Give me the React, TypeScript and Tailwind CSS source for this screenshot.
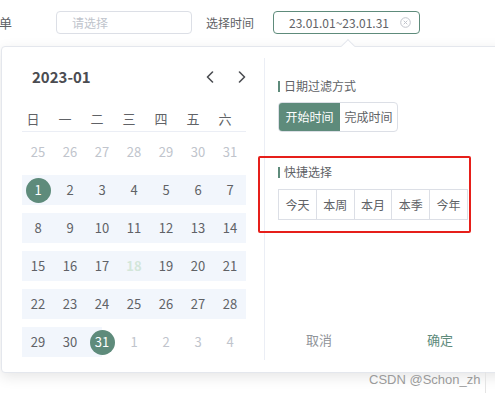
import React from "react";

const GREEN = "#5e8b7b";

type Day = { n: number; muted?: boolean };

const weeks: Day[][] = [
  [25, 26, 27, 28, 29, 30, 31].map((n) => ({ n, muted: true })),
  [1, 2, 3, 4, 5, 6, 7].map((n) => ({ n })),
  [8, 9, 10, 11, 12, 13, 14].map((n) => ({ n })),
  [15, 16, 17, 18, 19, 20, 21].map((n) => ({ n })),
  [22, 23, 24, 25, 26, 27, 28].map((n) => ({ n })),
  [
    { n: 29 },
    { n: 30 },
    { n: 31 },
    { n: 1, muted: true },
    { n: 2, muted: true },
    { n: 3, muted: true },
    { n: 4, muted: true },
  ],
];

const weekNames = ["日", "一", "二", "三", "四", "五", "六"];
const quick = ["今天", "本周", "本月", "本季", "今年"];

function Chevron({ dir }: { dir: "left" | "right" }) {
  return (
    <svg width="8" height="12" viewBox="0 0 8 12" fill="none">
      <path
        d={dir === "left" ? "M6.5 1 L1.5 6 L6.5 11" : "M1.5 1 L6.5 6 L1.5 11"}
        stroke="#4b4d52"
        strokeWidth="1.6"
        strokeLinecap="round"
        strokeLinejoin="round"
      />
    </svg>
  );
}

function DayCell({ day, row }: { day: Day; row: number }) {
  const selected = (row === 1 && day.n === 1) || (row === 5 && day.n === 31);
  const today = row === 3 && day.n === 18;
  const halfBg = row === 5 && day.n === 31;

  return (
    <div
      className={`flex h-full items-center justify-center ${
        halfBg ? "bg-[linear-gradient(to_right,#f2f6fc_50%,transparent_50%)]" : ""
      }`}
    >
      {selected ? (
        <span
          className="flex h-[25px] w-[25px] items-center justify-center rounded-full text-[13px] text-white"
          style={{ backgroundColor: GREEN }}
        >
          {day.n}
        </span>
      ) : (
        <span
          className={`text-[13px] ${
            day.muted ? "text-[#c0c4cc]" : today ? "font-bold text-[#d3e6da]" : "text-[#606266]"
          }`}
        >
          {day.n}
        </span>
      )}
    </div>
  );
}

function Calendar() {
  return (
    <div className="w-[262px] shrink-0 pl-[20px] pr-[18px] pt-[18px]">
      <div className="flex h-[24px] items-center justify-between">
        <span className="ml-[10px] text-[15px] font-bold text-[#4a4c51]">2023-01</span>
        <div className="flex items-center gap-[24px]">
          <Chevron dir="left" />
          <Chevron dir="right" />
        </div>
      </div>

      <div className="mt-[18px] grid h-[25px] grid-cols-7 items-center border-b border-[#ebeef5]">
        {weekNames.map((w) => (
          <span key={w} className="pr-[10px] text-center text-[13px] text-[#606266]">
            {w}
          </span>
        ))}
      </div>

      <div className="mt-[5px] flex flex-col gap-[8px]">
        {weeks.map((week, r) => (
          <div
            key={r}
            className={`grid h-[30px] grid-cols-7 ${r >= 1 && r <= 4 ? "bg-[#f2f6fc]" : ""}`}
          >
            {week.map((d, c) => (
              <div
                key={c}
                className={r === 5 && c < 2 ? "bg-[#f2f6fc]" : ""}
              >
                <DayCell day={d} row={r} />
              </div>
            ))}
          </div>
        ))}
      </div>
    </div>
  );
}

function Label({ text }: { text: string }) {
  return (
    <div className="flex h-[16px] items-center gap-[4px]">
      <span className="h-[11px] w-[2px]" style={{ backgroundColor: GREEN }} />
      <span className="text-[12px] text-[#606266]">{text}</span>
    </div>
  );
}

function FilterPanel() {
  return (
    <div className="mb-[12px] mt-[11px] flex flex-1 flex-col border-l border-[#ebeef5] pl-[13px] pt-[20px]">
      <Label text="日期过滤方式" />
      <div className="mt-[8px] flex h-[30px] w-[120px] overflow-hidden rounded-[4px] border border-[#dcdfe6] text-[12px]">
        <span
          className="flex w-[61px] items-center justify-center text-white"
          style={{ backgroundColor: GREEN }}
        >
          开始时间
        </span>
        <span className="flex flex-1 items-center justify-center text-[#606266]">完成时间</span>
      </div>

      <div className="relative mt-[32px] w-[190px]">
        <Label text="快捷选择" />
        <div className="mt-[9px] flex h-[31px] border border-[#dcdfe6]">
          {quick.map((q, i) => (
            <span
              key={q}
              className={`flex flex-1 items-center justify-center text-[12px] text-[#606266] ${
                i > 0 ? "border-l border-[#dcdfe6]" : ""
              }`}
            >
              {q}
            </span>
          ))}
        </div>
        <div className="pointer-events-none absolute -bottom-[13px] -left-[20px] -right-[3px] -top-[8px] rounded-[2px] border-[2px] border-[#e61f1a]" />
      </div>

      <div className="mt-auto flex h-[40px] items-center text-[13px]">
        <span className="ml-[1px] w-[80px] text-center text-[#909399]">取消</span>
        <span className="ml-[41px] w-[80px] text-center" style={{ color: GREEN }}>
          确定
        </span>
      </div>
    </div>
  );
}

export default function App() {
  return (
    <div className="relative h-[393px] w-[495px] overflow-hidden bg-white font-['Noto_Sans_CJK_SC',sans-serif]">
      <div className="flex h-[46px] items-start pt-[11px] text-[12px]">
        <span className="-ml-[1px] flex h-[23px] items-center text-[13px] text-[#606266]">单</span>
        <div className="ml-[44px] flex h-[23px] w-[136px] items-center rounded-[4px] border border-[#dcdfe6] pl-[15px] text-[#c0c4cc]">
          请选择
        </div>
        <span className="ml-[14px] flex h-[23px] items-center text-[#606266]">选择时间</span>
        <div
          className="ml-[19px] flex h-[23px] w-[147px] items-center rounded-[4px] border pl-[15px] text-[12px] text-[#606266]"
          style={{ borderColor: GREEN }}
        >
          <span>23.01.01~23.01.31</span>
          <svg className="ml-[11px]" width="11" height="11" viewBox="0 0 11 11" fill="none">
            <circle cx="5.5" cy="5.5" r="4.8" stroke="#c0c4cc" strokeWidth="1" />
            <path d="M3.7 3.7 L7.3 7.3 M7.3 3.7 L3.7 7.3" stroke="#c0c4cc" strokeWidth="1" />
          </svg>
        </div>
      </div>

      <div className="relative ml-[1px] flex h-[327px] w-[540px] rounded-[4px] border border-[#e4e7ed] bg-white shadow-[0_4px_14px_rgba(0,0,0,0.10)]">
        <span className="absolute -top-[6px] left-[341px] h-[10px] w-[10px] rotate-45 border-l border-t border-[#e4e7ed] bg-white" />
        <Calendar />
        <FilterPanel />
      </div>

      <span className="absolute left-[369px] top-[370px] font-['Liberation_Sans',sans-serif] text-[13px] text-[#9a9a9a]">
        CSDN @Schon_zh
      </span>
      <span className="absolute left-[485px] top-[372px] h-[21px] w-px bg-[#e4e4e4]" />
    </div>
  );
}
